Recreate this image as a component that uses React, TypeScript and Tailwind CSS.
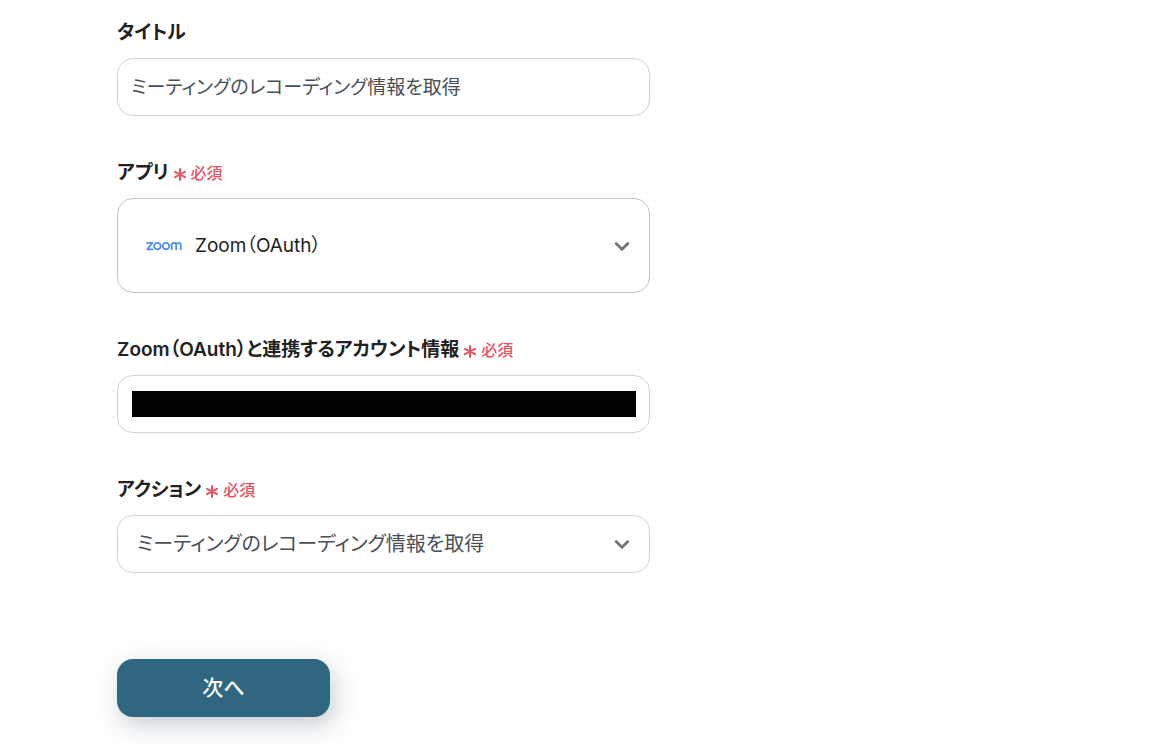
import { useState } from "react";
import type { ReactNode } from "react";

const ACTIONS = ["ミーティングのレコーディング情報を取得"];
const APPS = ["Zoom（OAuth）"];

function Asterisk() {
  return (
    <svg width="14" height="16" viewBox="0 0 14 16" fill="none" stroke="currentColor" strokeWidth="2" strokeLinecap="round" aria-hidden="true">
      <path d="M7 4v11M2 6.800l10 5.400M12 6.800L2 12.200" />
    </svg>
  );
}

function Chevron() {
  return (
    <svg
      className="pointer-events-none absolute top-1/2 right-5 -translate-y-1/2 text-[#757575]"
      width="16"
      height="16"
      viewBox="0 0 16 16"
      fill="none"
      stroke="currentColor"
      strokeWidth="2.8"
      strokeLinecap="round"
      aria-hidden="true"
    >
      <path d="M2.2 5.6L8 11.2l5.8-5.6" />
    </svg>
  );
}

function ZoomLogo() {
  return (
    <svg
      className="pointer-events-none absolute top-1/2 left-7 -translate-y-1/2 text-[#4f8ff7]"
      width="38"
      height="10"
      viewBox="0 0 38 10"
      fill="none"
      stroke="currentColor"
      strokeWidth="1.8"
      strokeLinecap="round"
      strokeLinejoin="round"
      aria-hidden="true"
    >
      <path d="M2 1.900h5.400L2.200 8.300h5.400" />
      <circle cx="12.400" cy="5.100" r="3.300" />
      <circle cx="21" cy="5.100" r="3.300" />
      <path d="M26.600 8.400V4.200a2.300 2.300 0 0 1 4.600 0v4.200M31.200 4.200a2.300 2.300 0 0 1 4.600 0v4.200" />
    </svg>
  );
}

type FieldProps = {
  id: string;
  label: string;
  required?: boolean;
  children: ReactNode;
};

function Field({ id, label, required, children }: FieldProps) {
  return (
    <div className="flex flex-col gap-[10px]">
      <label htmlFor={id} className="flex items-center text-[19px] leading-[30px] font-semibold text-[#222]">
        {label}
        {required && (
          <span className="ml-1 flex items-center gap-1 text-base leading-6 font-medium text-[#eb5160]">
            <Asterisk />
            必須
          </span>
        )}
      </label>
      {children}
    </div>
  );
}

export default function App() {
  const [title, setTitle] = useState(ACTIONS[0]);

  return (
    <main className="bg-white px-[117px] pt-[18px] font-['Inter','Noto_Sans_CJK_JP',sans-serif] [font-feature-settings:'palt']">
      <form className="w-full max-w-[533px]" onSubmit={(e) => e.preventDefault()}>
        <div className="flex flex-col gap-[42px]">
          <Field id="title" label="タイトル">
            <input
              id="title"
              type="text"
              value={title}
              onChange={(e) => setTitle(e.target.value)}
              className="h-[58px] w-full rounded-2xl border border-[#ced4da] bg-white px-[13px] pb-1 text-[19px] text-[#495057] outline-none"
            />
          </Field>

          <Field id="app" label="アプリ" required>
            <div className="relative">
              <select
                id="app"
                className="block h-[95px] w-full appearance-none rounded-2xl border border-[#c4c4c4] bg-white pt-[2px] pr-12 pl-[77px] text-[19px] text-[#222] outline-none"
              >
                {APPS.map((app) => (
                  <option key={app}>{app}</option>
                ))}
              </select>
              <ZoomLogo />
              <Chevron />
            </div>
          </Field>

          <Field id="account" label="Zoom（OAuth）と連携するアカウント情報" required>
            <div className="flex h-[58px] items-center rounded-2xl border border-[#ced4da] pr-[13px] pl-[14px]">
              <input id="account" type="text" readOnly className="h-[26px] w-full bg-black outline-none" />
            </div>
          </Field>

          <Field id="action" label="アクション" required>
            <div className="relative">
              <select
                id="action"
                className="block h-[58px] w-full appearance-none rounded-2xl border border-[#ced4da] bg-white pr-12 pl-[19px] text-[20px] text-[#495057] outline-none"
              >
                {ACTIONS.map((action) => (
                  <option key={action}>{action}</option>
                ))}
              </select>
              <Chevron />
            </div>
          </Field>
        </div>

        <button
          type="submit"
          className="mt-[86px] mb-7 block h-[58px] w-[213px] rounded-2xl bg-[#2f6780] text-[21px] font-medium text-white shadow-[4px_8px_24px_rgba(33,53,71,0.25)]"
        >
          次へ
        </button>
      </form>
    </main>
  );
}
